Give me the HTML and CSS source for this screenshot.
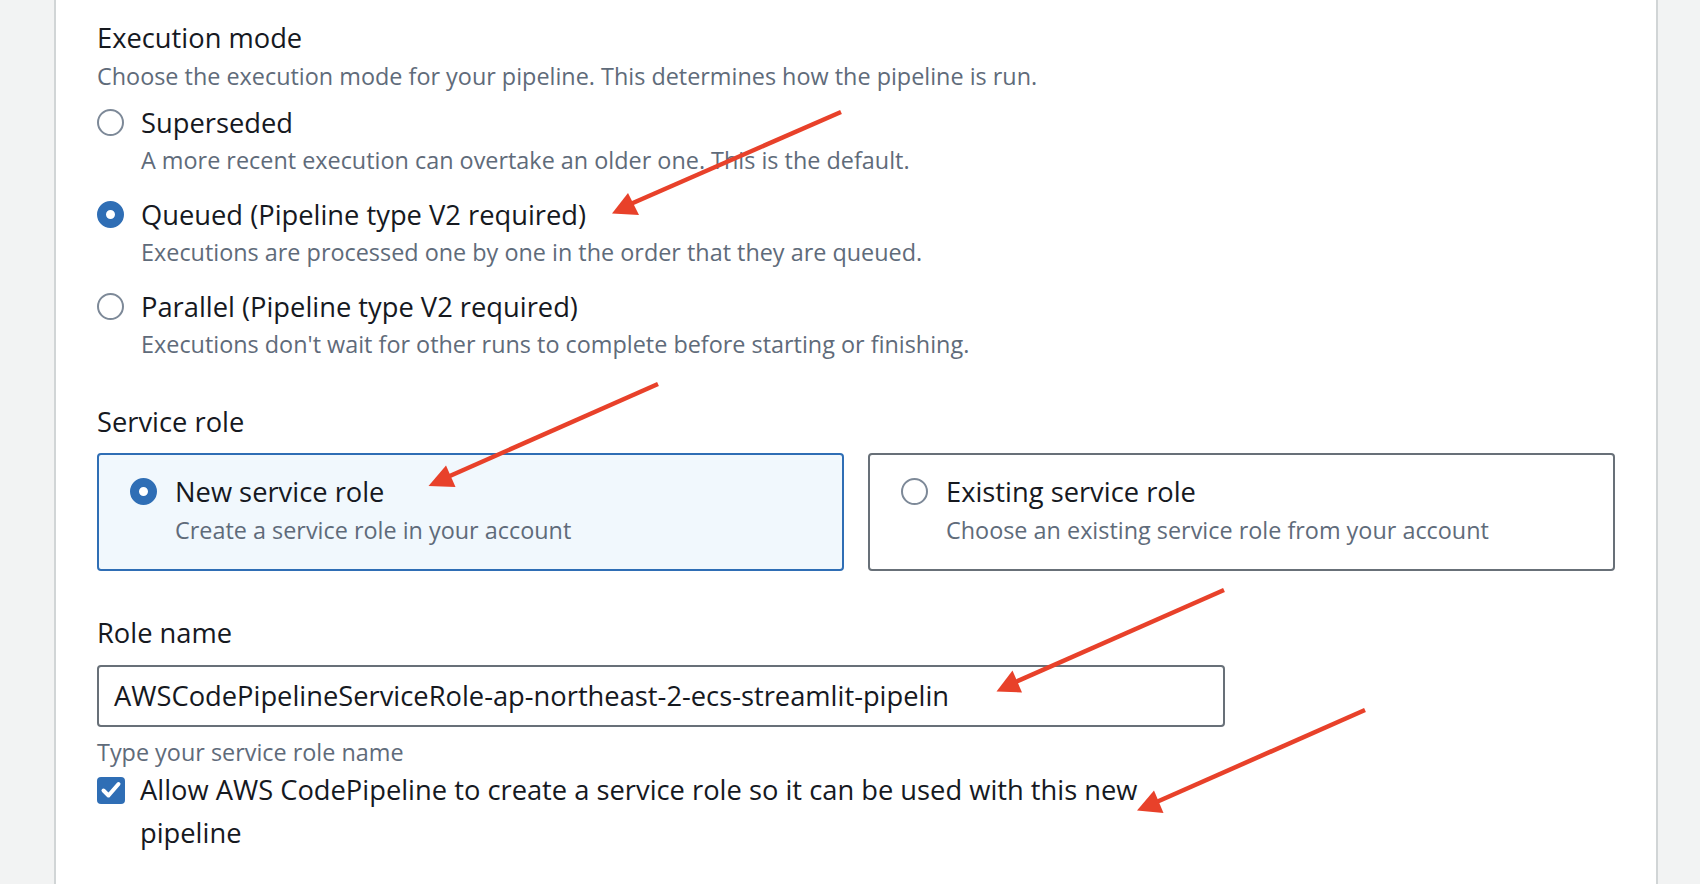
FILE: index.html
```html
<!DOCTYPE html>
<html lang="en">
<head>
<meta charset="utf-8">
<title>Pipeline settings</title>
<link rel="stylesheet" href="styles.css">
</head>
<body>
<div class="page">
  <main class="panel">
    <section class="field">
      <div class="field-label">Execution mode</div>
      <div class="field-desc">Choose the execution mode for your pipeline. This determines how the pipeline is run.</div>
      <div class="radio-group">
        <div class="radio-option">
          <div class="radio-row"><span class="radio"></span><span class="radio-label">Superseded</span></div>
          <div class="radio-desc">A more recent execution can overtake an older one. This is the default.</div>
        </div>
        <div class="radio-option">
          <div class="radio-row"><span class="radio checked"></span><span class="radio-label">Queued (Pipeline type V2 required)</span></div>
          <div class="radio-desc">Executions are processed one by one in the order that they are queued.</div>
        </div>
        <div class="radio-option">
          <div class="radio-row"><span class="radio"></span><span class="radio-label">Parallel (Pipeline type V2 required)</span></div>
          <div class="radio-desc">Executions don't wait for other runs to complete before starting or finishing.</div>
        </div>
      </div>
    </section>

    <section class="field field-service">
      <div class="field-label">Service role</div>
      <div class="tiles">
        <div class="tile selected">
          <div class="radio-row"><span class="radio checked"></span><span class="radio-label">New service role</span></div>
          <div class="tile-desc">Create a service role in your account</div>
        </div>
        <div class="tile">
          <div class="radio-row"><span class="radio"></span><span class="radio-label">Existing service role</span></div>
          <div class="tile-desc">Choose an existing service role from your account</div>
        </div>
      </div>
    </section>

    <section class="field field-role">
      <div class="field-label">Role name</div>
      <div class="input-box">AWSCodePipelineServiceRole-ap-northeast-2-ecs-streamlit-pipelin</div>
      <div class="constraint">Type your service role name</div>
      <div class="check-row">
        <span class="checkbox"><svg viewBox="0 0 28 28" width="28" height="28"><path d="M6.5 14.5 L11.5 19.5 L21.5 8" fill="none" stroke="#fff" stroke-width="4" stroke-linecap="round" stroke-linejoin="round"/></svg></span>
        <span class="check-label">Allow AWS CodePipeline to create a service role so it can be used with this new pipeline</span>
      </div>
    </section>
  </main>

  <svg class="annotations" width="1700" height="884" viewBox="0 0 1700 884">
    <g stroke="#e8412a" stroke-width="4.5" stroke-linecap="butt" fill="none">
      <line x1="841" y1="112" x2="626" y2="206"/>
      <line x1="658" y1="384" x2="443" y2="479"/>
      <line x1="1224" y1="590" x2="1011" y2="684"/>
      <line x1="1365" y1="710" x2="1152" y2="804"/>
    </g>
    <g fill="#e8412a">
      <polygon points="612,213.5 628,193 639,215"/>
      <polygon points="428.5,486 446,465.5 455.5,487"/>
      <polygon points="996.5,691.5 1012.5,670.5 1022,692.5"/>
      <polygon points="1137,810.5 1154,790.5 1163.5,813"/>
    </g>
  </svg>
</div>
</body>
</html>
```
FILE: styles.css
```css
html, body {
  margin: 0;
  padding: 0;
  height: 884px;
  overflow: hidden;
}
body {
  background: #f2f3f3;
  font-family: "Open Sans", "Noto Sans", sans-serif;
  color: #16191f;
}
.page {
  position: relative;
  height: 884px;
}
.panel {
  margin-left: 54px;
  width: 1604px;
  height: 884px;
  box-sizing: border-box;
  background: #ffffff;
  border-left: 2px solid #d1d5d6;
  border-right: 2px solid #d1d5d6;
  padding: 16px 41px 0 41px;
}
.field-label {
  font-size: 27.3px;
  line-height: 43px;
  color: #16191f;
}
.field-desc, .radio-desc, .tile-desc, .constraint {
  font-size: 23.4px;
  line-height: 31px;
  color: #5f6b7a;
}
.field-desc {
  margin-top: 2px;
}
.radio-group {
  margin-top: 8.5px;
  display: flex;
  flex-direction: column;
  gap: 17px;
}
.radio-row {
  display: flex;
  align-items: center;
  gap: 17px;
  height: 43px;
}
.radio-label {
  font-size: 27.3px;
  line-height: 43px;
  color: #16191f;
}
.radio-desc {
  margin-top: 1px;
  padding-left: 44px;
}
.radio {
  width: 27px;
  height: 27px;
  box-sizing: border-box;
  border-radius: 50%;
  border: 2px solid #7d8998;
  background: #fff;
  flex: none;
}
.radio.checked {
  border: 9px solid #2f6eb5;
  background: #fff;
}
.field-service {
  margin-top: 40px;
}
.tiles {
  margin-top: 10.5px;
  display: grid;
  grid-template-columns: 1fr 1fr;
  gap: 24px;
}
.tile {
  border: 2px solid #687078;
  border-radius: 4px;
  background: #fff;
  padding: 14.5px 31px 23.5px 31px;
}
.tile.selected {
  border-color: #2f6eb5;
  background: #f1f8fd;
}
.tile-desc {
  margin-top: 2px;
  padding-left: 45px;
}
.tile .radio-row {
  gap: 18px;
}
.field-role {
  margin-top: 40px;
}
.input-box {
  margin-top: 11px;
  width: 1128px;
  height: 62px;
  box-sizing: border-box;
  border: 2px solid #687078;
  border-radius: 4px;
  padding: 0 15px;
  font-size: 27.3px;
  line-height: 58px;
  color: #16191f;
  white-space: nowrap;
}
.constraint {
  margin-top: 9.5px;
}
.check-row {
  margin-top: 0.5px;
  width: 1128px;
  display: flex;
  align-items: flex-start;
  gap: 15px;
}
.checkbox {
  flex: none;
  width: 28px;
  height: 27px;
  margin-top: 8.5px;
  border-radius: 4px;
  background: #2f6eb5;
  display: flex;
  align-items: center;
  justify-content: center;
}
.checkbox svg {
  display: block;
}
.check-label {
  font-size: 27.3px;
  line-height: 43px;
  color: #16191f;
}
.annotations {
  position: absolute;
  left: 0;
  top: 0;
  pointer-events: none;
}
```
